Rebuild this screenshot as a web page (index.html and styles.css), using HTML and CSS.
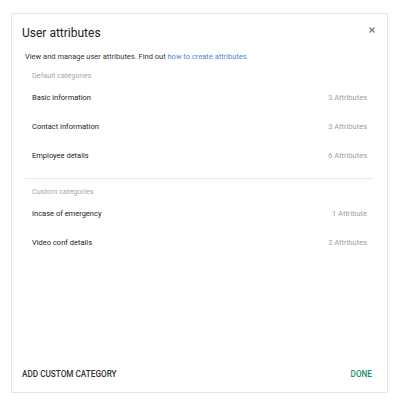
FILE: index.html
```html
<!DOCTYPE html>
<html>
<head>
<meta charset="utf-8">
<link rel="stylesheet" href="styles.css">
</head>
<body>
<div class="dialog">
  <div class="header">
    <h1 class="title">User attributes</h1>
    <svg class="close" width="6" height="6" viewBox="0 0 6 6"><path d="M0.5 0.5L5.5 5.5M5.5 0.5L0.5 5.5" stroke="#757575" stroke-width="1.1"/></svg>
  </div>
  <p class="desc">View and manage user attributes. Find out <a class="link">how to create attributes.</a></p>
  <div class="section first">
    <div class="section-label">Default categories</div>
    <div class="row"><span class="name">Basic information</span><span class="count">3 Attributes</span></div>
    <div class="row"><span class="name">Contact information</span><span class="count">3 Attributes</span></div>
    <div class="row"><span class="name">Employee details</span><span class="count">6 Attributes</span></div>
  </div>
  <div class="divider"></div>
  <div class="section second">
    <div class="section-label">Custom categories</div>
    <div class="row"><span class="name">Incase of emergency</span><span class="count">1 Attribute</span></div>
    <div class="row"><span class="name">Video conf details</span><span class="count">2 Attributes</span></div>
  </div>
  <div class="spacer"></div>
  <div class="footer">
    <span class="btn">ADD CUSTOM CATEGORY</span>
    <span class="btn done">DONE</span>
  </div>
</div>
</body>
</html>
```
FILE: styles.css
```css
html, body { margin: 0; padding: 0; background: #fff; }
body { font-family: Roboto, "Liberation Sans", sans-serif; color: #212121; }
.dialog {
  margin: 13px 0 0 11px;
  width: 377px;
  height: 380px;
  border: 1px solid #e6e6e6;
  box-sizing: border-box;
  display: flex;
  flex-direction: column;
}
.header { display: flex; justify-content: space-between; align-items: flex-start; padding: 11px 12px 0 10px; }
.title { margin: 0; font-size: 12px; font-weight: 400; line-height: 16px; color: #212121; }
.close { margin-top: 2px; }
.desc { margin: 11px 0 0 13px; font-size: 7.5px; line-height: 10px; color: #333; }
.link { color: #4a86e8; }
.section { padding: 0 20px; }
.section.first { padding-bottom: 7px; }
.section-label { font-size: 7.3px; color: #a8a8a8; line-height: 10px; }
.first .section-label { margin-top: 9px; }
.second .section-label { margin-top: 8.4px; }
.row { display: flex; justify-content: space-between; font-size: 7.5px; line-height: 10px; height: 29px; align-items: center; }
.first .section-label + .row { margin-top: 2.5px; }
.second .section-label + .row { margin-top: 3px; }
.name { color: #222; }
.count { color: #9e9e9e; }
.divider { height: 1px; background: #e8e8e8; margin: 0 14px 0 13px; }
.spacer { flex: 1; }
.footer { display: flex; justify-content: space-between; padding: 0 15px 13.5px 10px; }
.btn { font-size: 8.2px; font-weight: 500; color: #333; line-height: 10px; }
.done { color: #1e8a6e; }
```
